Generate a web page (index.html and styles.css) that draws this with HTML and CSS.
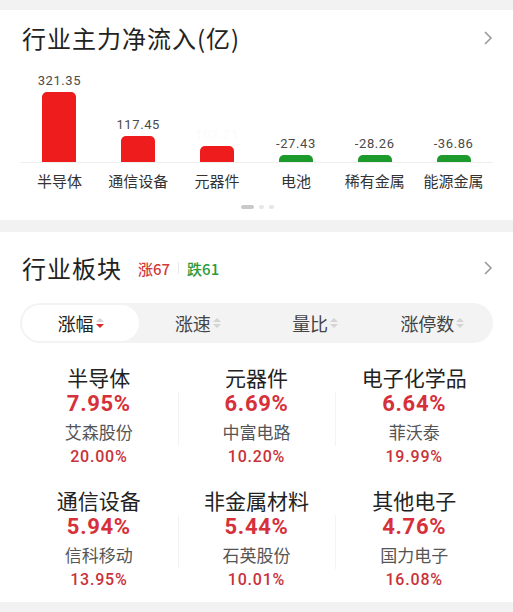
FILE: index.html
```html
<!DOCTYPE html>
<html lang="zh-CN">
<head>
    <meta charset="UTF-8">
    <meta name="viewport" content="width=device-width, initial-scale=1.0">
    <title>行业资金</title>
    <link rel="stylesheet" href="styles.css">
</head>
<body>
    <!-- 主力资金净流入柱状图 -->
    <section class="card flow-card">
        <div class="card-head">
            <h2 class="card-title">行业主力净流入(亿)</h2>
            <svg class="chevron" width="10" height="16" viewBox="0 0 10 16"><polyline points="2,2 8,8 2,14" fill="none" stroke="#9a9a9a" stroke-width="1.6"/></svg>
        </div>

        <div class="chart">
            <div class="col">
                <span class="val">321.35</span>
                <div class="bar up" style="height:70px"></div>
            </div>
            <div class="col">
                <span class="val">117.45</span>
                <div class="bar up" style="height:26px"></div>
            </div>
            <div class="col">
                <span class="val faded">103.21</span>
                <div class="bar up" style="height:16px"></div>
            </div>
            <div class="col">
                <span class="val">-27.43</span>
                <div class="bar down" style="height:7px"></div>
            </div>
            <div class="col">
                <span class="val">-28.26</span>
                <div class="bar down" style="height:7px"></div>
            </div>
            <div class="col">
                <span class="val">-36.86</span>
                <div class="bar down" style="height:7px"></div>
            </div>
        </div>
        <div class="chart-labels">
            <span>半导体</span>
            <span>通信设备</span>
            <span>元器件</span>
            <span>电池</span>
            <span>稀有金属</span>
            <span>能源金属</span>
        </div>

        <div class="pager">
            <i class="dot active"></i><i class="dot"></i><i class="dot"></i>
        </div>
    </section>

    <!-- 行业板块涨幅榜 -->
    <section class="card sector-card">
        <div class="card-head">
            <h2 class="card-title">行业板块</h2>
            <span class="count rise">涨67</span>
            <span class="count-sep"></span>
            <span class="count fall">跌61</span>
            <svg class="chevron" width="10" height="16" viewBox="0 0 10 16"><polyline points="2,2 8,8 2,14" fill="none" stroke="#9a9a9a" stroke-width="1.6"/></svg>
        </div>

        <div class="tabs">
            <div class="tab active">涨幅<span class="sort desc"></span></div>
            <div class="tab">涨速<span class="sort"></span></div>
            <div class="tab">量比<span class="sort"></span></div>
            <div class="tab">涨停数<span class="sort"></span></div>
        </div>

        <div class="grid">
            <div class="cell">
                <div class="name">半导体</div>
                <div class="pct">7.95%</div>
                <div class="lead">艾森股份</div>
                <div class="lead-pct">20.00%</div>
            </div>
            <div class="cell">
                <div class="name">元器件</div>
                <div class="pct">6.69%</div>
                <div class="lead">中富电路</div>
                <div class="lead-pct">10.20%</div>
            </div>
            <div class="cell">
                <div class="name">电子化学品</div>
                <div class="pct">6.64%</div>
                <div class="lead">菲沃泰</div>
                <div class="lead-pct">19.99%</div>
            </div>
            <div class="cell">
                <div class="name">通信设备</div>
                <div class="pct">5.94%</div>
                <div class="lead">信科移动</div>
                <div class="lead-pct">13.95%</div>
            </div>
            <div class="cell">
                <div class="name">非金属材料</div>
                <div class="pct">5.44%</div>
                <div class="lead">石英股份</div>
                <div class="lead-pct">10.01%</div>
            </div>
            <div class="cell">
                <div class="name">其他电子</div>
                <div class="pct">4.76%</div>
                <div class="lead">国力电子</div>
                <div class="lead-pct">16.08%</div>
            </div>
        </div>
    </section>
</body>
</html>
```

FILE: styles.css
```css
body {
    margin: 0;
    padding: 10px 0;
    background: #f2f2f2;
    font-family: "Noto Sans CJK SC", "Noto Sans", sans-serif;
    color: #222;
}

.card {
    background: #ffffff;
    padding: 0 20px;
}

.card-head {
    display: flex;
    align-items: center;
    height: 28px;
    padding-left: 2px;
}

.card-title {
    margin: 0;
    font-size: 24px;
    font-weight: 400;
    line-height: 28px;
    letter-spacing: 1px;
    color: #222;
}

.chevron {
    margin-left: auto;
}

/* 资金流柱状图 */
.flow-card {
    padding-top: 14px;
    height: 196px;
}

.chart {
    display: flex;
    align-items: flex-end;
    height: 94px;
    margin-top: 16px;
    border-bottom: 1px solid #eeeeee;
}

.col {
    flex: 1;
    display: flex;
    flex-direction: column;
    align-items: center;
}

.val {
    font-family: Roboto, "Noto Sans", sans-serif;
    font-size: 13px;
    letter-spacing: 0.6px;
    color: #4a4a4a;
    line-height: 16px;
    margin-bottom: 3px;
}

/* 被遮挡的数值，几乎看不见 */
.val.faded {
    color: #fbfbfb;
}

.bar {
    width: 34px;
    border-radius: 5px 5px 0 0;
}

.bar.up {
    background: #ee1c1c;
}

.bar.down {
    background: #1d9a2c;
}

.chart-labels {
    display: flex;
    margin-top: 7px;
}

.chart-labels span {
    flex: 1;
    text-align: center;
    font-size: 15px;
    line-height: 22px;
    color: #333;
}

.pager {
    display: flex;
    justify-content: center;
    gap: 5px;
    margin-top: 13px;
    padding-left: 2px;
}

.dot {
    width: 5px;
    height: 4px;
    border-radius: 2px;
    background: #e6e6e6;
}

.dot.active {
    width: 13px;
    background: #c9c9c9;
}

/* 行业板块 */
.sector-card {
    margin-top: 12px;
    padding-top: 22px;
    padding-bottom: 11px;
}

.count {
    font-size: 15px;
    font-weight: 500;
    margin-left: 16px;
}

.count.rise {
    color: #d23a3a;
}

.count.fall {
    color: #2e9a3a;
    margin-left: 0;
}

.count-sep {
    width: 1px;
    height: 12px;
    background: #e8e8e8;
    margin: 0 8px;
}

.tabs {
    display: flex;
    margin-top: 21px;
    height: 40px;
    padding: 2px;
    box-sizing: border-box;
    background: #f3f3f3;
    border-radius: 20px;
}

.tab {
    flex: 1;
    display: flex;
    align-items: center;
    justify-content: center;
    font-size: 18px;
    color: #444;
    border-radius: 18px;
}

.tab.active {
    background: #ffffff;
    color: #222;
}

/* 上下排序三角 */
.sort {
    display: inline-flex;
    flex-direction: column;
    gap: 2px;
    margin-left: 2px;
}

.sort::before,
.sort::after {
    content: "";
    border-left: 4px solid transparent;
    border-right: 4px solid transparent;
}

.sort::before {
    border-bottom: 4px solid #d4d4d4;
}

.sort::after {
    border-top: 4px solid #d4d4d4;
}

.sort.desc::after {
    border-top-color: #d92b2b;
}

.grid {
    display: grid;
    grid-template-columns: repeat(3, 1fr);
    row-gap: 19px;
    margin-top: 21px;
}

.cell {
    position: relative;
    text-align: center;
}

.cell:not(:nth-child(3n+1))::before {
    content: "";
    position: absolute;
    left: 0;
    top: 28px;
    bottom: 22px;
    width: 1px;
    background: #f3f3f3;
}

.name {
    font-size: 21px;
    line-height: 26px;
    color: #222;
}

.pct {
    font-family: Roboto, "Noto Sans", sans-serif;
    font-size: 22px;
    font-weight: 700;
    line-height: 28px;
    letter-spacing: 0.7px;
    color: #d6303a;
}

.lead {
    font-size: 17px;
    line-height: 28px;
    color: #555;
}

.lead-pct {
    font-family: Roboto, "Noto Sans", sans-serif;
    font-size: 16px;
    font-weight: 500;
    line-height: 22px;
    letter-spacing: 0.8px;
    color: #c8323a;
}
```
